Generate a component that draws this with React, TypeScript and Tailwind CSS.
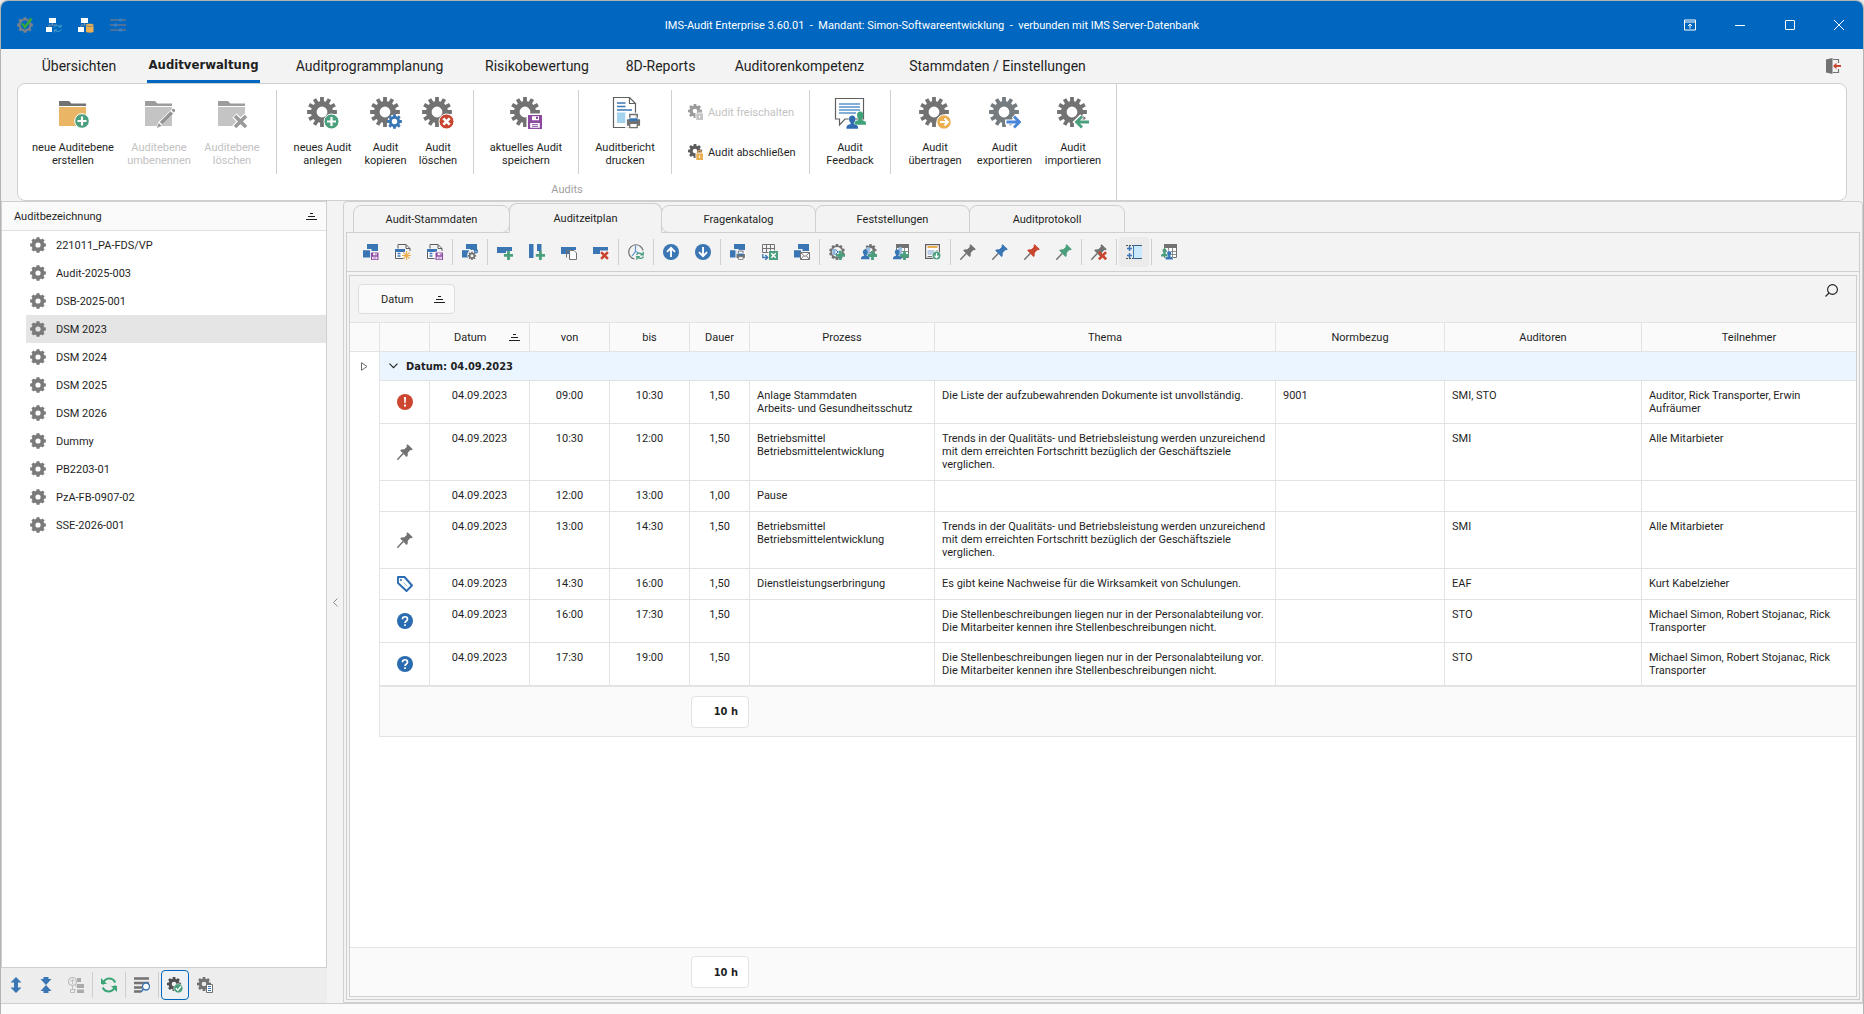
import type { ReactNode } from "react";

const GREY = "#727272";
const BLUE = "#3a76b4";
const GREEN = "#4a9f7c";
const RED = "#c9452e";
const PURPLE = "#8b4aa0";
const AMBER = "#ebae51";

/* ---------- icon primitives ---------- */

function gearPath(cx: number, cy: number, teeth: number, outer: number, inner: number, hole: number) {
  const step = (Math.PI * 2) / teeth;
  const pts: string[] = [];
  const at = (r: number, a: number) => `${(cx + r * Math.sin(a)).toFixed(2)} ${(cy - r * Math.cos(a)).toFixed(2)}`;
  for (let i = 0; i < teeth; i++) {
    const a = i * step;
    pts.push(at(inner, a - step * 0.34), at(outer, a - step * 0.24), at(outer, a + step * 0.24), at(inner, a + step * 0.34));
  }
  return `M${pts.join("L")}ZM${cx - hole} ${cy}a${hole} ${hole} 0 1 0 ${hole * 2} 0a${hole} ${hole} 0 1 0 ${-hole * 2} 0Z`;
}

const GEAR_LARGE = gearPath(15, 15, 12, 15, 11, 5.4);
const GEAR_SMALL = gearPath(8, 8, 8, 8, 6.4, 2.6);
const GEAR_MEDIUM = gearPath(7, 7, 8, 7.2, 5.4, 2.3);

const I16 = ({ children }: { children: ReactNode }) => (
  <svg viewBox="0 0 16 16" className="size-4 shrink-0" fill="none" aria-hidden="true">
    {children}
  </svg>
);
const I32 = ({ children }: { children: ReactNode }) => (
  <svg viewBox="0 0 32 32" className="size-8 shrink-0" fill="none" aria-hidden="true">
    {children}
  </svg>
);

const LargeGear = ({ fill = GREY }: { fill?: string }) => <path d={GEAR_LARGE} fill={fill} fillRule="evenodd" />;

const Floppy = ({ x, y, s }: { x: number; y: number; s: number }) => (
  <g transform={`translate(${x} ${y}) scale(${s / 14})`}>
    <rect x="-1.5" y="-1.5" width="17" height="17" fill="#fff" />
    <path d="M0 0h14v14H0z" fill={PURPLE} />
    <path d="M4 1.3h7v4H4zM2.2 8h9.6v4.8H2.2z" fill="#fff" />
    <path d="M8 1.8h2v2.2H8z" fill={PURPLE} />
    <path d="M4 9.6h6M4 11.4h6" stroke={PURPLE} strokeWidth=".9" />
  </g>
);

const Blocks = () => (
  <>
    <path d="M4 0h11v7H8.5V5H4z" fill={BLUE} />
    <path d="M0 6.2h7v1.8h1v5.5H0z" fill={BLUE} />
  </>
);
const Plus = ({ x = 11, y = 11 }: { x?: number; y?: number }) => (
  <path d={`M${x - 4.6} ${y}h9.2M${x} ${y - 4.6}v9.2`} stroke={GREEN} strokeWidth="2.8" />
);
const Cross = ({ x = 11.5, y = 11.5, r = 3.4 }: { x?: number; y?: number; r?: number }) => (
  <path d={`M${x - r} ${y - r}l${r * 2} ${r * 2}M${x + r} ${y - r}l${-r * 2} ${r * 2}`} stroke={RED} strokeWidth="2.6" />
);
const Person = ({ x, y, s, fill }: { x: number; y: number; s: number; fill: string }) => (
  <path
    transform={`translate(${x} ${y}) scale(${s})`}
    d="M5 0c1.8 0 2.8 1.3 2.8 3S6.9 5.8 6.4 6.3v1C8 7.8 10 8.3 10 10v1.5H0V10c0-1.7 2-2.2 3.600-2.700v-1C3.100 5.800 2.200 4.700 2.200 3S3.200 0 5 0z"
    fill={fill}
  />
);
const Printer = ({ x, y, s }: { x: number; y: number; s: number }) => (
  <g transform={`translate(${x} ${y}) scale(${s / 16})`}>
    <rect x="-1" y="-1" width="18" height="18" fill="#fff" fillOpacity=".8" />
    <path d="M4 4.500V1h8v3.500" stroke={GREY} strokeWidth="1.600" />
    <path d="M1 6h14v7H1z" fill={GREY} />
    <path d="M3.500 5h9v3h-9z" fill={BLUE} />
    <path d="M4 10.500h8V15H4z" fill="#fff" stroke={GREY} strokeWidth="1.400" />
  </g>
);

const Pin = ({ color }: { color: string }) => (
  <>
    <path d="M.3 15.700 6.200 9.500" stroke={GREY} strokeWidth="1.500" />
    <path d="M10.600.2 15.800 5.300 14.600 6.300 13.400 6 10.800 8.700 10.600 12 9.500 12.900 3.200 6.500 4.200 5.500 7.400 5.300 9.900 2.700 9.500 1.300z" fill={color} />
  </>
);

/* ---------- title bar icons ---------- */

const AppLogo = () => (
  <I16>
    <path d={GEAR_SMALL} fill="#77808c" fillRule="evenodd" />
    <circle cx="8" cy="8" r="4.400" fill="#0067c0" />
    <path d="M5 6.500 8 10l6.500-8.500" stroke="#35a83a" strokeWidth="2.400" />
  </I16>
);
const Tree = () => (
  <>
    <path d="M3 1h7v5H3zM0 10h6v5H0z" fill="#fff" />
    <path d="M6.500 6v2M3 10V8h8" stroke="#7d8ea3" />
  </>
);
const TreeSync = () => (
  <I16>
    <Tree />
    <path d="M8 10.500c1.500-2.500 5-2.500 6.500-.5M15.500 12.500c-1.500 2.500-5 2.500-6.500.500M15 7.500V10h-2.500M8.500 15.500V13H11" stroke="#4aa3c9" />
  </I16>
);
const TreeDb = () => (
  <I16>
    <Tree />
    <path d="M8 8c0-1.600 7.500-1.600 7.500 0v6.500c0 1.600-7.500 1.600-7.500 0z" fill={AMBER} />
    <path d="M8 8.500c1 1.200 6.500 1.200 7.500 0" stroke="#0067c0" strokeWidth=".5" />
  </I16>
);
const Sliders = () => (
  <I16>
    <path d="M0 3h16M0 8h16M0 13h16" stroke="#66748a" strokeWidth="1.400" />
    <path d="M9 1.500h3v3H9zM4 6.500h3v3H4zM9 11.500h3v3H9z" fill="#3b82c4" />
  </I16>
);

/* ---------- ribbon icons ---------- */

const Folder = ({ tab, body }: { tab: string; body: string }) => (
  <>
    <path d="M2 4h10l2.500 2.500H29V9H2z" fill={tab} />
    <path d="M2 10h27v19H2z" fill={body} />
  </>
);
const FolderAdd = () => (
  <I32>
    <Folder tab="#727272" body="#ebb566" />
    <circle cx="25" cy="24" r="7.300" fill={GREEN} stroke="#fff" />
    <path d="M20.500 24h9M25 19.500v9" stroke="#fff" strokeWidth="2.200" />
  </I32>
);
const FolderEdit = () => (
  <I32>
    <Folder tab="#9c9c9c" body="#c4c4c4" />
    <path d="M13 32l2.500-7L29.500 11.500l3 3L18.500 28.500z" fill="#fff" />
    <path d="M14 31l1.800-5 2.800 2.800zM16.800 25 27.500 14.200l2.600 2.600L19.400 27.600zM28.500 13.200l1.200-1.200c1-1 3.300 1 2.300 2.300l-1.200 1.200z" fill="#949494" />
  </I32>
);
const FolderRemove = () => (
  <I32>
    <Folder tab="#9c9c9c" body="#c4c4c4" />
    <path d="M18.500 18.500l12 12M30.500 18.500l-12 12" stroke="#fff" strokeWidth="6" />
    <path d="M19 19l11 11M30 19 19 30" stroke="#9a9a9a" strokeWidth="3.600" />
  </I32>
);
const GearAdd = () => (
  <I32>
    <LargeGear />
    <circle cx="24.500" cy="24.500" r="7.500" fill={GREEN} stroke="#fff" />
    <path d="M20 24.500h9M24.500 20v9" stroke="#fff" strokeWidth="2.200" />
  </I32>
);
const GearCopy = () => (
  <I32>
    <LargeGear />
    <circle cx="24.500" cy="24.500" r="7" fill="#fff" />
    <path d={gearPath(24.5, 24.5, 8, 7.5, 5.6, 2.7)} fill={BLUE} fillRule="evenodd" />
  </I32>
);
const GearDelete = () => (
  <I32>
    <LargeGear />
    <circle cx="24.500" cy="24.500" r="7.500" fill={RED} stroke="#fff" />
    <path d="M21.300 21.300l6.400 6.400M27.700 21.300l-6.400 6.400" stroke="#fff" strokeWidth="2.600" />
  </I32>
);
const GearSave = () => (
  <I32>
    <LargeGear />
    <Floppy x={18} y={18} s={14} />
  </I32>
);
const ReportPrint = () => (
  <I32>
    <path d="M4.500.5h16l6 6V30.500h-22z" fill="#fff" stroke="#5f5f5f" strokeWidth="1.200" />
    <path d="M20.500.5v6h6" stroke="#5f5f5f" strokeWidth="1.200" />
    <path d="M8 6h8.500M8 9.500h8.500M8 13h15" stroke={BLUE} strokeWidth="1.400" />
    <path d="M8 15.500h9.500V26H8z" fill="#a3d3ef" />
    <Printer x={17} y={16.5} s={15} />
  </I32>
);
const Feedback = () => (
  <I32>
    <path d="M1.500 1.500h28V22H11l-5.500 6v-6h-4z" fill="#fff" stroke="#5f5f5f" strokeWidth="1.200" />
    <path d="M5 7h21M5 10h21M5 13h21M5 16h17" stroke="#5a94cc" strokeWidth="1.300" />
    <Person x={20.5} y={14.5} s={1.15} fill="#3fa377" />
    <Person x={12} y={18} s={1.2} fill="#fff" />
    <Person x={12.5} y={18.5} s={1.15} fill="#2f6db0" />
  </I32>
);
const GearTransfer = () => (
  <I32>
    <LargeGear />
    <circle cx="25" cy="25" r="7.200" fill={AMBER} stroke="#fff" />
    <path d="M21 25h7.500M25.500 21.500l3.500 3.500-3.500 3.500" stroke="#fff" strokeWidth="2" />
  </I32>
);
const GearExport = () => (
  <I32>
    <LargeGear fill="#747c80" />
    <path d="M16 25h13M24.500 19l6 6-6 6" stroke="#fff" strokeWidth="5" />
    <path d="M17.500 25H30M25 19.500l5.500 5.500L25 30.500" stroke="#4a86d8" strokeWidth="2.800" />
  </I32>
);
const GearImport = () => (
  <I32>
    <LargeGear />
    <path d="M19 25h13M25 19l-6 6 6 6" stroke="#fff" strokeWidth="5" />
    <path d="M19 25h13.500M25 19.500 19.500 25l5.500 5.500" stroke={GREEN} strokeWidth="2.800" />
  </I32>
);
const GearLock = ({ off }: { off?: boolean }) => (
  <I16>
    <path d={GEAR_MEDIUM} fill={off ? "#9a9a9a" : "#5c5c5c"} fillRule="evenodd" />
    <path d="M7.500 8.500h8V16h-8z" fill="#fff" />
    <path d="M9.800 9.500V8c0-2 3.400-2 3.400 0v1.500" stroke={off ? "#b5b5b5" : AMBER} strokeWidth="1.200" />
    <path d="M8.300 9.500h6.700V16H8.300z" fill={off ? "#c4c4c4" : AMBER} />
    <path d="M11.600 11.500v2.500" stroke="#fff" />
  </I16>
);
const ExitDoor = () => (
  <I16>
    <path d="M1 1.500 7.500 0v16L1 14.500z" fill={GREY} />
    <path d="M8 1.500h5.500V5M13.500 11v3.500H8" stroke={GREY} strokeWidth="1.200" />
    <path d="M9 8h7" stroke={RED} strokeWidth="2" />
    <path d="M11.500 4.800v6.400L8 8z" fill={RED} />
  </I16>
);

/* ---------- toolbar icons ---------- */

const FormSheet = () => (
  <>
    <path d="M3 4.500v-4h8l4 4V7M11 .5v4h4" stroke="#5f5f5f" />
    <path d="M.5 5.500h9v9h-9z" fill="#fff" stroke="#5f5f5f" />
    <path d="M0 5h10v3H0z" fill={BLUE} />
    <path d="M2.500 9.500h3M2.500 12h3" stroke={BLUE} strokeWidth="1.300" />
  </>
);
const GearUsers = ({ children }: { children?: ReactNode }) => (
  <>
    {children}
    <Person x={3.5} y={3} s={0.75} fill="#9bbfe4" />
    <Person x={0} y={5.5} s={0.85} fill={BLUE} />
    <Plus x={11.5} y={11.5} />
  </>
);
const Sheet = () => (
  <>
    <path d="M3.500 3.500h12v10h-12z" fill="#fff" stroke={GREY} />
    <path d="M3 0h13v4H3z" fill={GREY} />
    <path d="M7.500 4v9M11.500 4v9M4 7.500h11M4 10.500h11" stroke={GREY} strokeWidth=".8" />
  </>
);

type Tool = { label: string; icon: ReactNode; pressed?: boolean };
const SEP = "sep";

const toolbar: (Tool | typeof SEP)[] = [
  { label: "Zeitplan speichern", icon: <I16><Blocks /><Floppy x={8} y={8.5} s={7.5} /></I16> },
  {
    label: "Neue Vorlage",
    icon: (
      <I16>
        <FormSheet />
        <circle cx="11.500" cy="11.500" r="4" fill="#f3f3f3" />
        <path d="M11.500 7v9M7 11.500h9M8.300 8.300l6.400 6.400M14.700 8.300l-6.400 6.400" stroke={AMBER} strokeWidth="1.200" />
      </I16>
    ),
  },
  { label: "Vorlage speichern", icon: <I16><FormSheet /><Floppy x={8.5} y={8.5} s={7.5} /></I16> },
  SEP,
  {
    label: "Einstellungen",
    icon: (
      <I16>
        <Blocks />
        <circle cx="10.500" cy="11" r="5.300" fill="#f3f3f3" />
        <path d={gearPath(10, 11.8, 8, 4.2, 3.2, 1.5)} fill={GREY} fillRule="evenodd" />
        <path d={gearPath(14, 7.2, 6, 2.4, 1.8, 0.7)} fill={BLUE} fillRule="evenodd" />
      </I16>
    ),
  },
  SEP,
  { label: "Zeile anfügen", icon: <I16><path d="M0 3h15v4H9v2H0z" fill={BLUE} /><Plus x={11.5} y={11.4} /></I16> },
  { label: "Spalte anfügen", icon: <I16><path d="M0 0h4.500v14H0zM8 0h4.500v7H8z" fill={BLUE} /><Plus x={11.4} y={11.4} /></I16> },
  {
    label: "Zeile kopieren",
    icon: (
      <I16>
        <path d="M0 3h15v3H8v4H0z" fill={BLUE} />
        <path d="M5.500 13.500v-7h4" stroke={GREY} />
        <path d="M8.500 6.500h4.500l2.500 2.500v6.500h-7z" fill="#fff" stroke={GREY} />
      </I16>
    ),
  },
  { label: "Zeile löschen", icon: <I16><path d="M0 3h15v3.500H7V10H0z" fill={BLUE} /><Cross /></I16> },
  SEP,
  {
    label: "Zeiten aktualisieren",
    icon: (
      <I16>
        <path d="M15 6.500A7.200 7.200 0 1 0 6.500 15" stroke={GREY} strokeWidth="1.200" />
        <path d="M7.500 1.500v6L4 12M7.500 7.500l4 2" stroke="#5a94cc" strokeWidth="1.200" />
        <path d="M8.500 11c1-2.500 4.500-2.500 6-.5M15.500 12.500c-1 2.500-4.500 2.500-6 .5M15.300 7.800v3h-3M8.800 15.700v-3h3" stroke={GREEN} strokeWidth="1.300" />
      </I16>
    ),
  },
  SEP,
  { label: "Nach oben", icon: <I16><circle cx="8" cy="8" r="8" fill={BLUE} /><path d="M8 13V4M4 7.800 8 3.800l4 4" stroke="#fff" strokeWidth="1.900" /></I16> },
  { label: "Nach unten", icon: <I16><circle cx="8" cy="8" r="8" fill={BLUE} /><path d="M8 3v9M4 8.200l4 4 4-4" stroke="#fff" strokeWidth="1.900" /></I16> },
  SEP,
  { label: "Drucken", icon: <I16><Blocks /><Printer x={6} y={6.5} s={9.5} /></I16> },
  {
    label: "Nach Excel exportieren",
    icon: (
      <I16>
        <path d="M.5.500h12v6M.5.500v8M.5 4.500h12M4.500.500v8M8.500.500v6M.5 8.500h6" stroke={GREY} />
        <path d="M.8 10v3.500H5M3.300 11l2.500 2.500L3.300 16" stroke={BLUE} strokeWidth="1.300" />
        <path d="M7 7h9v9H7z" fill={GREEN} />
        <path d="M9.300 9.300l4.400 4.400M13.700 9.300l-4.400 4.400" stroke="#fff" strokeWidth="1.500" />
      </I16>
    ),
  },
  { label: "Per E-Mail senden", icon: <I16><Blocks /><path d="M6.500 8.500h9v7h-9z" fill="#fff" stroke={GREY} /><path d="M6.500 8.500l4.500 4 4.500-4M6.500 15.500l3-3.500M15.500 15.500l-3-3.500" stroke={GREY} /></I16> },
  SEP,
  {
    label: "Prozess hinzufügen",
    icon: (
      <I16>
        <path d={gearPath(8, 8, 10, 8, 6.6, 5)} fill={GREY} fillRule="evenodd" />
        <path d="M3.500 5h3v6h-3z" fill="#8fb5db" />
        <path d="M6.500 5.500 9 8l-2.500 2.500M8 8h3" stroke={BLUE} />
        <Plus x={11.4} y={11.4} />
      </I16>
    ),
  },
  { label: "Auditoren hinzufügen", icon: <I16><GearUsers><path d={gearPath(9.5, 6, 8, 6, 4.6, 2)} fill={GREY} fillRule="evenodd" /></GearUsers></I16> },
  { label: "Teilnehmer hinzufügen", icon: <I16><GearUsers><Sheet /></GearUsers></I16> },
  {
    label: "Daten übernehmen",
    icon: (
      <I16>
        <path d="M.6.600h13.800v13.800H.6z" fill="#fff" stroke="#5f5f5f" strokeWidth="1.200" />
        <path d="M2.500 3h10" stroke={AMBER} strokeWidth="2" />
        <path d="M2.500 6h7v5h-7z" fill="#bccfe6" />
        <path d="M11 7h2M2.500 12.500h5" stroke={GREY} />
        <circle cx="11.500" cy="11.500" r="4.300" fill={GREEN} stroke="#fff" strokeWidth=".6" />
        <path d="M11.500 9v4.500M9.500 11.700l2 2 2-2" stroke="#fff" strokeWidth="1.200" />
      </I16>
    ),
  },
  SEP,
  { label: "Pin grau", icon: <I16><Pin color={GREY} /></I16> },
  { label: "Pin blau", icon: <I16><Pin color={BLUE} /></I16> },
  { label: "Pin rot", icon: <I16><Pin color={RED} /></I16> },
  { label: "Pin grün", icon: <I16><Pin color={GREEN} /></I16> },
  SEP,
  { label: "Pin entfernen", icon: <I16><Pin color={GREY} /><Cross x={11.5} y={11.7} r={3.6} /></I16> },
  SEP,
  {
    label: "Zeilenhöhe automatisch",
    pressed: true,
    icon: (
      <I16>
        <path d="M7 1h9v14H7z" fill="#c9e8fb" />
        <path d="M0 1.500h7M0 14.500h7" stroke="#4c4c4c" strokeDasharray="2 1" />
        <path d="M7 1.500h9M7 14.500h9" stroke="#3d5f7d" />
        <path d="M7.500 1v14" stroke={BLUE} />
        <path d="M3.500 2v5M1 4.500h5M3.500 9v5M1 11.500h5" stroke={BLUE} strokeWidth="1.500" />
      </I16>
    ),
  },
  SEP,
  {
    label: "Teilnehmerübersicht",
    icon: (
      <I16>
        <Sheet />
        <Person x={0} y={4.5} s={0.7} fill={GREEN} />
        <Person x={3.8} y={6.4} s={0.85} fill="#fff" />
        <Person x={4.5} y={7} s={0.74} fill={BLUE} />
      </I16>
    ),
  },
];

const bottomTools: (Tool | typeof SEP)[] = [
  { label: "Alle aufklappen", icon: <I16><path d="M8 0l5.500 5.500H10v5h3.500L8 16l-5.500-5.500H6v-5H2.500z" fill={BLUE} /></I16> },
  { label: "Alle zuklappen", icon: <I16><path d="M5.500 0h5v2h3L8 8 2.500 2h3zM5.500 16h5v-2h3L8 8l-5.500 6h3z" fill={BLUE} /></I16> },
  {
    label: "Ebene nach oben",
    icon: (
      <I16>
        <circle cx="4.500" cy="4.500" r="4" stroke="#c2c2c2" strokeWidth="1.400" />
        <path d="M4.500 7V2.500M2.500 4.500l2-2 2 2M4.500 9v3M2.500 12.500h5.500M8 10V7" stroke="#c2c2c2" />
        <path d="M9 1h4v4H9zM9 7h7v4H9zM9 12.500h7V16H9z" fill="#ababab" />
        <path d="M2.500 12.500h4v3h-4z" fill="#eee" stroke="#bdbdbd" />
      </I16>
    ),
  },
  SEP,
  { label: "Aktualisieren", icon: <I16><path d="M2 7.500C2 4 5 1.500 8 1.500c2.800 0 5.200 1.600 6.200 4M14 8.500c0 3.500-3 6-6 6-2.800 0-5.200-1.600-6.200-4" stroke="#3aa576" strokeWidth="2" /><path d="M0 1v6h6zM16 15V9h-6z" fill="#3aa576" /></I16> },
  SEP,
  {
    label: "Suchen",
    icon: (
      <I16>
        <path d="M0 1.500h15M0 6h15M0 10.500h8M0 14.500h7" stroke={GREY} strokeWidth="2.400" />
        <circle cx="12" cy="9.500" r="3.500" fill="#fff" stroke={BLUE} strokeWidth="1.400" />
        <path d="M9.500 12 7 15" stroke={BLUE} strokeWidth="1.600" />
      </I16>
    ),
  },
  SEP,
  {
    label: "Abgeschlossene Audits",
    pressed: true,
    icon: (
      <I16>
        <path d={GEAR_MEDIUM} fill="#4f4f4f" fillRule="evenodd" />
        <circle cx="11.300" cy="11.300" r="4.600" fill={GREEN} stroke="#eee" strokeWidth=".6" />
        <path d="M8.800 11.300l2 2 3.200-4" stroke="#fff" strokeWidth="1.400" />
      </I16>
    ),
  },
  {
    label: "Auditliste",
    icon: (
      <I16>
        <path d={GEAR_MEDIUM} fill={GREY} fillRule="evenodd" />
        <path d="M9.500 7.500h6v8h-6z" fill="#fff" stroke={GREY} />
        <path d="M11 9.500h3M11 11.500h3M11 13.500h3" stroke={BLUE} />
      </I16>
    ),
  },
];

const SortMark = () => (
  <svg viewBox="0 0 11 9" className="h-[9px] w-[11px] shrink-0" fill="none" aria-hidden="true">
    <path d="M4 1.500h3M2 4.500h7M0 7.500h11" stroke="#1f1f1f" />
  </svg>
);

/* ---------- data ---------- */

const tabs: { label: string; width: string; active?: boolean }[] = [
  { label: "Übersichten", width: "w-[104px]" },
  { label: "Auditverwaltung", width: "w-[145px]", active: true },
  { label: "Auditprogrammplanung", width: "w-[187px]" },
  { label: "Risikobewertung", width: "w-[148px]" },
  { label: "8D-Reports", width: "w-[99px]" },
  { label: "Auditorenkompetenz", width: "w-[179px]" },
  { label: "Stammdaten / Einstellungen", width: "w-[217px]" },
];

const audits = [
  "221011_PA-FDS/VP", "Audit-2025-003", "DSB-2025-001", "DSM 2023", "DSM 2024", "DSM 2025",
  "DSM 2026", "Dummy", "PB2203-01", "PzA-FB-0907-02", "SSE-2026-001",
];

const innerTabs = [
  { label: "Audit-Stammdaten", width: "w-[157px]", corners: "rounded-t-lg rounded-br-lg" },
  { label: "Auditzeitplan", width: "w-[153px]", corners: "rounded-t-lg", active: true },
  { label: "Fragenkatalog", width: "w-[155px]", corners: "rounded-t-lg rounded-bl-lg" },
  { label: "Feststellungen", width: "w-[155px]", corners: "rounded-t-lg" },
  { label: "Auditprotokoll", width: "w-[156px]", corners: "rounded-t-lg" },
];

const Alert = () => (
  <I16><circle cx="8" cy="8" r="8" fill="#cc4630" /><path d="M7 3h2l-.3 6H7.300zM7 10.500h2v2H7z" fill="#fff" /></I16>
);
const Question = () => (
  <I16>
    <circle cx="8" cy="8" r="8" fill="#2b6cb0" />
    <path d="M5.500 6.200c0-3.300 5-3.300 5 0 0 1.800-2.500 1.800-2.500 3.800M8 11.200v1.800" stroke="#fff" strokeWidth="1.700" />
  </I16>
);
const Tag = () => (
  <I16>
    <path d="M1 1h6.500L15 9.500 9.500 15 1 7z" fill="#fff" stroke="#2b6cb0" strokeWidth="1.900" strokeLinejoin="round" />
    <circle cx="4" cy="4" r="1" fill="#2b6cb0" />
    <path d="M6.500 6.500l4 4" stroke="#7fa8cf" strokeWidth=".8" />
  </I16>
);
const GreyPin = () => <I16><Pin color={GREY} /></I16>;

const trends =
  "Trends in der Qualitäts- und Betriebsleistung werden unzureichend mit dem erreichten Fortschritt bezüglich der Geschäftsziele verglichen.";
const stellen =
  "Die Stellenbeschreibungen liegen nur in der Personalabteilung vor. Die Mitarbeiter kennen ihre Stellenbeschreibungen nicht.";

const rows: { icon?: ReactNode; h: string; from: string; to: string; dur: string; proc: string[]; topic: string; norm: string; aud: string; part: string }[] = [
  { icon: <Alert />, h: "h-[43px]", from: "09:00", to: "10:30", dur: "1,50", proc: ["Anlage Stammdaten", "Arbeits- und Gesundheitsschutz"], topic: "Die Liste der aufzubewahrenden Dokumente ist unvollständig.", norm: "9001", aud: "SMI, STO", part: "Auditor, Rick Transporter, Erwin Aufräumer" },
  { icon: <GreyPin />, h: "h-[57px]", from: "10:30", to: "12:00", dur: "1,50", proc: ["Betriebsmittel", "Betriebsmittelentwicklung"], topic: trends, norm: "", aud: "SMI", part: "Alle Mitarbieter" },
  { h: "h-[31px]", from: "12:00", to: "13:00", dur: "1,00", proc: ["Pause"], topic: "", norm: "", aud: "", part: "" },
  { icon: <GreyPin />, h: "h-[57px]", from: "13:00", to: "14:30", dur: "1,50", proc: ["Betriebsmittel", "Betriebsmittelentwicklung"], topic: trends, norm: "", aud: "SMI", part: "Alle Mitarbieter" },
  { icon: <Tag />, h: "h-[31px]", from: "14:30", to: "16:00", dur: "1,50", proc: ["Dienstleistungserbringung"], topic: "Es gibt keine Nachweise für die Wirksamkeit von Schulungen.", norm: "", aud: "EAF", part: "Kurt Kabelzieher" },
  { icon: <Question />, h: "h-[43px]", from: "16:00", to: "17:30", dur: "1,50", proc: [], topic: stellen, norm: "", aud: "STO", part: "Michael Simon, Robert Stojanac, Rick Transporter" },
  { icon: <Question />, h: "h-[43px]", from: "17:30", to: "19:00", dur: "1,50", proc: [], topic: stellen, norm: "", aud: "STO", part: "Michael Simon, Robert Stojanac, Rick Transporter" },
];

/* ---------- pieces ---------- */

function RibbonButton({ icon, lines, width, disabled }: { icon: ReactNode; lines: [string, string]; width: string; disabled?: boolean }) {
  return (
    <button
      type="button"
      disabled={disabled}
      className={`${width} flex flex-col items-center gap-3 pt-[13px] whitespace-nowrap disabled:text-[#c2c2c2]`}
    >
      {icon}
      <span className="text-center leading-[13px]">
        {lines[0]}
        <br />
        {lines[1]}
      </span>
    </button>
  );
}

const RibbonSeparator = () => <span className="mt-1.5 h-[84px] w-px shrink-0 bg-[#cfcfcf]" />;

function SmallRibbonButton({ icon, label, disabled }: { icon: ReactNode; label: string; disabled?: boolean }) {
  return (
    <button type="button" disabled={disabled} className="flex h-6 items-center gap-1 whitespace-nowrap disabled:text-[#c2c2c2]">
      {icon}
      {label}
    </button>
  );
}

function Total() {
  return (
    <div className="ml-[341px] flex h-8 w-[58px] items-center justify-end rounded border border-[#e3e3e3] bg-white pr-2.5 font-['DejaVu_Sans_Condensed',sans-serif] font-bold">
      10 h
    </div>
  );
}

const HEAD = "h-[29px] border-r border-b border-[#e3e3e3] p-0 text-center font-normal";
const CELL = "border-r border-b border-[#e3e3e3] px-[7px] pt-2 pb-2 align-top";
const MID = "border-r border-b border-[#e3e3e3] px-0 pt-2 pb-2 text-center align-top";

export default function App() {
  return (
    <div className="h-screen bg-[#e9e9e9] font-['Roboto',sans-serif] text-[11px] leading-[13px] text-[#1f1f1f]">
      <div className="flex h-full flex-col overflow-hidden rounded-t-lg border-x border-t border-[#b3b3b3] bg-[#f3f3f3]">
        {/* title bar */}
        <header className="grid h-12 shrink-0 grid-cols-[1fr_auto_1fr] items-center bg-[#0067c0] text-white">
          <div className="flex items-center gap-[13px] pl-4">
            <AppLogo />
            <div className="flex items-center gap-4">
              <button type="button" aria-label="Struktur aktualisieren"><TreeSync /></button>
              <button type="button" aria-label="Datenbank"><TreeDb /></button>
              <button type="button" aria-label="Optionen"><Sliders /></button>
            </div>
          </div>
          <h1 className="whitespace-pre">
            {"IMS-Audit Enterprise 3.60.01  -  Mandant: Simon-Softwareentwicklung  -  verbunden mit IMS Server-Datenbank"}
          </h1>
          <div className="flex items-center justify-end">
            <button type="button" aria-label="Menüband anzeigen" className="flex h-12 w-[50px] items-center justify-center">
              <svg viewBox="0 0 12 12" className="size-3" fill="none" stroke="#fff">
                <path d="M.5 1h11v10H.5zM0 3h12M6 9.500V5.500M4 7l2-2 2 2" />
              </svg>
            </button>
            <button type="button" aria-label="Minimieren" className="flex h-12 w-[50px] items-center justify-center">
              <svg viewBox="0 0 10 10" className="size-2.5" stroke="#fff"><path d="M0 5.500h10" /></svg>
            </button>
            <button type="button" aria-label="Maximieren" className="flex h-12 w-[50px] items-center justify-center">
              <svg viewBox="0 0 10 10" className="size-2.5" fill="none" stroke="#fff"><rect x=".5" y=".5" width="9" height="9" rx=".5" /></svg>
            </button>
            <button type="button" aria-label="Schließen" className="flex h-12 w-12 items-center justify-center">
              <svg viewBox="0 0 10 10" className="size-2.5" stroke="#fff"><path d="M0 0l10 10M10 0L0 10" /></svg>
            </button>
          </div>
        </header>

        {/* ribbon tabs */}
        <nav className="flex h-[34px] shrink-0 items-stretch pr-[22px] pl-[26px] text-sm">
          {tabs.map((t) => (
            <button
              key={t.label}
              type="button"
              className={`${t.width} flex flex-col items-center whitespace-nowrap ${t.active ? "font-['DejaVu_Sans_Condensed',sans-serif] text-[13px] font-bold" : ""}`}
            >
              <span className="flex h-[31px] items-center pt-0.5">{t.label}</span>
              {t.active && <span className="h-[3px] w-[113px] bg-[#0067c0]" />}
            </button>
          ))}
          <button type="button" aria-label="Beenden" className="ml-auto">
            <ExitDoor />
          </button>
        </nav>

        {/* ribbon */}
        <section className="mr-4 ml-4 flex h-[118px] shrink-0 overflow-hidden rounded-lg border border-[#cfcfcf] bg-white">
          <div className="flex flex-col border-r border-[#cfcfcf]">
            <div className="flex flex-1">
              <div className="flex pr-3.5 pl-3">
                <RibbonButton width="w-[86px]" icon={<FolderAdd />} lines={["neue Auditebene", "erstellen"]} />
                <RibbonButton width="w-[86px]" icon={<FolderEdit />} lines={["Auditebene", "umbenennen"]} disabled />
                <RibbonButton width="w-[60px]" icon={<FolderRemove />} lines={["Auditebene", "löschen"]} disabled />
              </div>
              <RibbonSeparator />
              <div className="flex px-2.5">
                <RibbonButton width="w-[71px]" icon={<GearAdd />} lines={["neues Audit", "anlegen"]} />
                <RibbonButton width="w-[55px]" icon={<GearCopy />} lines={["Audit", "kopieren"]} />
                <RibbonButton width="w-[50px]" icon={<GearDelete />} lines={["Audit", "löschen"]} />
              </div>
              <RibbonSeparator />
              <RibbonButton width="w-[104px]" icon={<GearSave />} lines={["aktuelles Audit", "speichern"]} />
              <RibbonSeparator />
              <RibbonButton width="w-[92px]" icon={<ReportPrint />} lines={["Auditbericht", "drucken"]} />
              <RibbonSeparator />
              <div className="flex w-[137px] flex-col gap-4 pt-4 pl-4">
                <SmallRibbonButton icon={<GearLock off />} label="Audit freischalten" disabled />
                <SmallRibbonButton icon={<GearLock />} label="Audit abschließen" />
              </div>
              <RibbonSeparator />
              <RibbonButton width="w-20" icon={<Feedback />} lines={["Audit", "Feedback"]} />
              <RibbonSeparator />
              <div className="flex px-[7px]">
                <RibbonButton width="w-[74px]" icon={<GearTransfer />} lines={["Audit", "übertragen"]} />
                <RibbonButton width="w-[65px]" icon={<GearExport />} lines={["Audit", "exportieren"]} />
                <RibbonButton width="w-[72px]" icon={<GearImport />} lines={["Audit", "importieren"]} />
              </div>
            </div>
            <p className="pb-1 text-center text-[#a0a0a0]">Audits</p>
          </div>
        </section>

        {/* body */}
        <div className="flex min-h-0 flex-1">
          <aside className="flex w-[326px] shrink-0 flex-col bg-[#ededed]">
            <div className="flex min-h-0 flex-1 flex-col border border-[#cfcfcf] bg-white">
              <div className="flex h-[29px] shrink-0 items-center justify-between border-b border-[#e0e0e0] bg-[#fafafa] pr-[9px] pl-3">
                Auditbezeichnung
                <SortMark />
              </div>
              <ul>
                {audits.map((a) => (
                  <li key={a}>
                    <button
                      type="button"
                      className={`ml-6 flex h-7 w-[calc(100%-24px)] items-center gap-2.5 pl-1 text-left ${a === "DSM 2023" ? "bg-[#e5e5e5]" : ""}`}
                    >
                      <I16><path d={GEAR_SMALL} fill="#7a7a7a" fillRule="evenodd" /></I16>
                      {a}
                    </button>
                  </li>
                ))}
              </ul>
            </div>
            <div className="flex h-[35px] shrink-0 items-center pb-0.5">
              {bottomTools.map((t, i) =>
                t === SEP ? (
                  <span key={i} className="mx-px h-[26px] w-px bg-[#cfcfcf]" />
                ) : (
                  <button
                    key={t.label}
                    type="button"
                    aria-label={t.label}
                    aria-pressed={t.pressed}
                    className={`flex h-[30px] items-center justify-center ${t.pressed ? "mx-px w-7 rounded border border-[#0067c0] bg-[#eef1f4]" : "w-[30px]"}`}
                  >
                    {t.icon}
                  </button>
                ),
              )}
            </div>
          </aside>

          <button type="button" aria-label="Seitenleiste einklappen" className="flex w-4 shrink-0 items-center justify-center">
            <svg viewBox="0 0 5 9" className="h-[9px] w-[5px]" fill="none" stroke="#8c8c8c"><path d="M4.500.5l-4 4 4 4" /></svg>
          </button>

          <main className="flex min-w-0 flex-1 flex-col rounded-t border border-[#cfcfcf] px-0.5 pb-0.5">
            <div className="z-10 -mb-px flex h-[31px] items-end pl-[7px]">
              {innerTabs.map((t) => (
                <button
                  key={t.label}
                  type="button"
                  className={`${t.width} ${t.corners} -mr-px shrink-0 border border-[#cfcfcf] last:mr-0 ${t.active ? "z-10 h-[30px] border-b-[#f3f3f3] bg-[#f3f3f3]" : "h-7"}`}
                >
                  {t.label}
                </button>
              ))}
            </div>
            <div className="flex min-h-0 flex-1 flex-col border border-[#cfcfcf]">
              <div className="flex h-[39px] shrink-0 items-center border-b border-[#cfcfcf] pl-2">
                {toolbar.map((t, i) =>
                  t === SEP ? (
                    <span key={i} className="mx-px h-[26px] w-px bg-[#cfcfcf]" />
                  ) : (
                    <button
                      key={t.label}
                      type="button"
                      aria-label={t.label}
                      aria-pressed={t.pressed}
                      className="flex w-8 items-center justify-center"
                    >
                      <span className={`flex size-[30px] items-center justify-center rounded ${t.pressed ? "bg-[#ebebeb]" : ""}`}>{t.icon}</span>
                    </button>
                  ),
                )}
              </div>

              <div className="mx-0.5 mt-[3px] mb-0.5 flex min-h-0 flex-1 flex-col border border-[#cfcfcf] bg-white">
                <div className="flex h-[46px] shrink-0 items-start justify-between bg-[#f3f3f3] pt-2 pr-[18px] pl-2">
                  <button type="button" className="flex h-[30px] w-[97px] items-center justify-between rounded border border-[#dedede] bg-[#fafafa] pr-[9px] pl-[22px]">
                    Datum
                    <SortMark />
                  </button>
                  <button type="button" aria-label="Suchen">
                    <svg viewBox="0 0 13 13" className="size-[13px]" fill="none" stroke="#1f1f1f" strokeWidth="1.100">
                      <circle cx="7.500" cy="5.500" r="4.900" />
                      <path d="M4 9 .5 12.500" />
                    </svg>
                  </button>
                </div>

                <div className="min-h-0 flex-1 border-t border-[#e3e3e3]">
                  <table className="w-full table-fixed border-separate border-spacing-0">
                    <colgroup>
                      <col className="w-[30px]" />
                      <col className="w-[50px]" />
                      <col className="w-[100px]" />
                      <col className="w-20" />
                      <col className="w-20" />
                      <col className="w-[60px]" />
                      <col className="w-[185px]" />
                      <col className="w-[341px]" />
                      <col className="w-[169px]" />
                      <col className="w-[197px]" />
                      <col />
                    </colgroup>
                    <thead className="bg-[#fafafa]">
                      <tr>
                        <th className={HEAD} aria-label="Zeilenmarkierung" />
                        <th className={HEAD} aria-label="Status" />
                        <th className={HEAD}>
                          <div className="flex items-center justify-between pr-[9px] pl-6">
                            Datum
                            <SortMark />
                          </div>
                        </th>
                        <th className={HEAD}>von</th>
                        <th className={HEAD}>bis</th>
                        <th className={HEAD}>Dauer</th>
                        <th className={HEAD}>Prozess</th>
                        <th className={HEAD}>Thema</th>
                        <th className={HEAD}>Normbezug</th>
                        <th className={HEAD}>Auditoren</th>
                        <th className="h-[29px] border-b border-[#e3e3e3] p-0 text-center font-normal">Teilnehmer</th>
                      </tr>
                    </thead>
                    <tbody>
                      <tr>
                        <td className="h-[29px] border-r border-[#e3e3e3] p-0">
                          <svg viewBox="0 0 7 9" className="mx-auto h-[9px] w-[7px]" fill="none" stroke="#6e6e6e"><path d="M.5.700v7.600L6 4.500z" /></svg>
                        </td>
                        <td colSpan={10} className="border-b border-[#e3e3e3] bg-[#ebf5ff] p-0">
                          <button type="button" className="flex items-center gap-2 pl-[9px] font-['DejaVu_Sans_Condensed',sans-serif] font-bold">
                            <svg viewBox="0 0 9 6" className="h-1.5 w-[9px]" fill="none" stroke="#1f1f1f" strokeWidth="1.100"><path d="M.5.700l4 4 4-4" /></svg>
                            Datum: 04.09.2023
                          </button>
                        </td>
                      </tr>
                      {rows.map((r, i) => (
                        <tr key={i} className={r.h}>
                          <td className="border-r border-[#e3e3e3]" />
                          <td className="border-r border-b border-[#e3e3e3] p-0">
                            <div className="flex justify-center">{r.icon}</div>
                          </td>
                          <td className={MID}>04.09.2023</td>
                          <td className={MID}>{r.from}</td>
                          <td className={MID}>{r.to}</td>
                          <td className={MID}>{r.dur}</td>
                          <td className={CELL}>
                            {r.proc.map((p) => (
                              <div key={p}>{p}</div>
                            ))}
                          </td>
                          <td className={CELL}>{r.topic}</td>
                          <td className={CELL}>{r.norm}</td>
                          <td className={CELL}>{r.aud}</td>
                          <td className="border-b border-[#e3e3e3] px-[7px] py-2 align-top">{r.part}</td>
                        </tr>
                      ))}
                      <tr>
                        <td className="border-r border-[#e3e3e3]" />
                        <td colSpan={10} className="h-[51px] border-t border-b border-[#e3e3e3] bg-[#fafafa] p-0">
                          <div className="-ml-[30px]"><Total /></div>
                        </td>
                      </tr>
                    </tbody>
                  </table>
                </div>

                <div className="flex h-[49px] shrink-0 items-center border-t border-[#e3e3e3] bg-[#fafafa]">
                  <Total />
                </div>
              </div>
            </div>
          </main>
        </div>

        <footer className="h-[11px] shrink-0 border-t border-[#cfcfcf] bg-[#fafafa]" />
      </div>
    </div>
  );
}
